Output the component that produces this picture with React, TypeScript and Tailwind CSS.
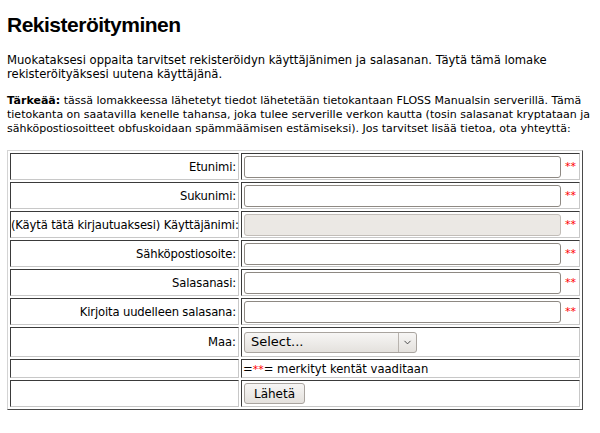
import { ChevronDown } from "lucide-react";

const fields = [
  { label: "Etunimi:" },
  { label: "Sukunimi:" },
  { label: "(Käytä tätä kirjautuaksesi) Käyttäjänimi:", disabled: true },
  { label: "Sähköpostiosoite:" },
  { label: "Salasanasi:", type: "password" },
  { label: "Kirjoita uudelleen salasana:", type: "password" },
];

const cell =
  "p-0 border border-t-[#3a3a3a] border-l-[#3a3a3a] border-b-[#c8c8c8] border-r-[#c8c8c8]";

function Req() {
  return <span className="text-[#ff0000] text-[11px]">**</span>;
}

export default function App() {
  return (
    <div className="px-[7px] pt-[12px] bg-white text-black min-h-[433px] font-['DejaVu_Sans',sans-serif] text-[11.6px] leading-[14px]">
      <h1 className="font-['Liberation_Sans',Arial,sans-serif] font-bold text-[21px] leading-[26px] tracking-[-0.5px]">
        Rekisteröityminen
      </h1>
      <p className="mt-[15px] whitespace-nowrap">
        Muokataksesi oppaita tarvitset rekisteröidyn käyttäjänimen ja salasanan. Täytä tämä lomake
        <br />
        rekisteröityäksesi uutena käyttäjänä.
      </p>
      <p className="mt-[13px] whitespace-nowrap text-[11px]">
        <b>Tärkeää:</b> tässä lomakkeessa lähetetyt tiedot lähetetään tietokantaan FLOSS Manualsin serverillä. Tämä
        <br />
        tietokanta on saatavilla kenelle tahansa, joka tulee serverille verkon kautta (tosin salasanat kryptataan ja
        <br />
        sähköpostiosoitteet obfuskoidaan spämmäämisen estämiseksi). Jos tarvitset lisää tietoa, ota yhteyttä:
      </p>

      <table className="mt-[14px] w-[576px] table-fixed border-separate border-spacing-[2px] border border-t-[#d4d4d4] border-l-[#d4d4d4] border-b-[#4a4a4a] border-r-[#4a4a4a]">
        <colgroup>
          <col className="w-[229px]" />
          <col />
        </colgroup>
        <tbody>
          {fields.map((f) => (
            <tr key={f.label} className="h-[27px]">
              <td className={`${cell} text-right pr-[2px] whitespace-nowrap tracking-[-0.15px]`}>{f.label}</td>
              <td className={cell}>
                <div className="flex items-center pl-[2px] pr-[2px]">
                  <input
                    type={f.type ?? "text"}
                    disabled={f.disabled}
                    className={`h-[22px] w-[317px] rounded-[3px] border border-[#8e8983] outline-none ${
                      f.disabled ? "bg-[#ebe8e4] border-[#c2bdb8]" : "bg-white"
                    }`}
                  />
                  <span className="ml-[4px]">
                    <Req />
                  </span>
                </div>
              </td>
            </tr>
          ))}
          <tr className="h-[30px]">
            <td className={`${cell} text-right pr-[2px]`}>Maa:</td>
            <td className={cell}>
              <div className="pl-[2px]">
                <div className="flex h-[21px] w-[173px] items-center rounded-[3px] border border-[#a9a49f] bg-gradient-to-b from-[#f7f6f5] to-[#e4e1dd] text-[13px]">
                  <span className="flex-1 pl-[6px]">Select...</span>
                  <span className="flex h-full w-[18px] items-center justify-center border-l border-[#b8b3ae]">
                    <ChevronDown size={11} strokeWidth={2} className="text-[#3c3c3c]" />
                  </span>
                </div>
              </div>
            </td>
          </tr>
          <tr className="h-[19px]">
            <td className={cell}></td>
            <td className={cell}>
              <div className="pl-[1px] pt-[2px]">
                =<Req />= merkityt kentät vaaditaan
              </div>
            </td>
          </tr>
          <tr className="h-[27px]">
            <td className={cell}></td>
            <td className={cell}>
              <div className="pl-[2px]">
                <button className="h-[21px] w-[61px] rounded-[3px] border border-[#a9a49f] bg-gradient-to-b from-[#f7f6f5] to-[#e4e1dd] text-[12px]">
                  Lähetä
                </button>
              </div>
            </td>
          </tr>
        </tbody>
      </table>
    </div>
  );
}
